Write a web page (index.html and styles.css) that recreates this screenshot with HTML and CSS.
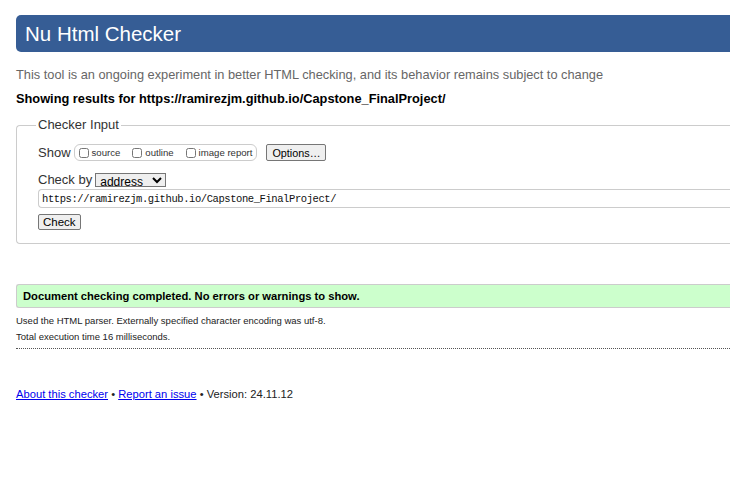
FILE: index.html
```html
<!DOCTYPE html>
<html lang="en">
<head>
  <meta charset="UTF-8" />
  <title>Showing results for https://ramirezjm.github.io/Capstone_FinalProject/ - Nu Html Checker</title>
  <link rel="stylesheet" href="styles.css">
</head>
<body>
  <div class="page">
    <h1 class="topbar">Nu Html Checker</h1>

    <p class="intro">This tool is an ongoing experiment in better HTML checking, and its behavior remains subject to change</p>
    <p class="showing">Showing results for https://ramirezjm.github.io/Capstone_FinalProject/</p>

    <form class="checker">
      <fieldset>
        <legend>Checker Input</legend>

        <div class="row">
          <span class="lbl">Show</span>
          <span class="opts">
            <label><input type="checkbox"> source</label>
            <label><input type="checkbox"> outline</label>
            <label><input type="checkbox"> image report</label>
          </span>
          <button type="button" class="btn">Options…</button>
        </div>

        <div class="row by">
          <span class="lbl">Check by</span>
          <select class="sel">
            <option>address</option>
            <option>file upload</option>
            <option>text input</option>
          </select>
        </div>

        <input class="url" type="text" value="https://ramirezjm.github.io/Capstone_FinalProject/">

        <div class="row">
          <button type="button" class="btn">Check</button>
        </div>
      </fieldset>
    </form>

    <p class="success">Document checking completed. No errors or warnings to show.</p>
    <p class="details">Used the HTML parser. Externally specified character encoding was utf-8.</p>
    <p class="details">Total execution time 16 milliseconds.</p>
    <hr class="dots">

    <p class="footer"><a href="#">About this checker</a> • <a href="#">Report an issue</a> • Version: 24.11.12</p>
  </div>
</body>
</html>
```

FILE: styles.css
```css
html, body {
  margin: 0;
  overflow: hidden;
}
body {
  font-family: "Liberation Sans", Arial, sans-serif;
  font-size: 12.8px;
  color: #000;
  background: #fff;
}
.page {
  width: 780px;
  padding: 15px 0 0 16px;
}
.topbar {
  margin: 0;
  height: 37px;
  line-height: 37px;
  padding-left: 9px;
  font-size: 20.5px;
  font-weight: normal;
  color: #fff;
  background: #365d95;
  border-radius: 5px 0 0 5px;
}
.intro {
  margin: 15px 0 0;
  color: #666;
  line-height: 16px;
}
.showing {
  margin: 8px 0 0;
  font-weight: bold;
  line-height: 16px;
}
.checker {
  margin-top: 10px;
}
fieldset {
  margin: 0;
  padding: 5px 0 13px 21px;
  border: 1px solid #ccc;
  border-right: 0;
  border-radius: 4px 0 0 4px;
}
legend {
  margin-left: -2px;
  padding: 0 2px;
  color: #333;
  font-size: 13px;
  line-height: 16px;
}
.row {
  display: flex;
  align-items: center;
  gap: 3px;
  margin-top: 6px;
}
.lbl {
  color: #333;
  font-size: 13px;
}
.opts {
  display: inline-flex;
  align-items: center;
  gap: 12px;
  height: 15px;
  padding: 0 4px;
  border: 1px solid #ccc;
  border-radius: 6px;
  font-size: 9.6px;
  color: #333;
}
.opts label {
  display: inline-flex;
  align-items: center;
}
.opts input {
  width: 10px;
  height: 10px;
  margin: 0 3px 0 0;
}
.btn {
  margin-left: 6px;
  padding: 0 5px;
  height: 17px;
  font: 10.8px "Liberation Sans", Arial, sans-serif;
  color: #000;
  background: #efefef;
  border: 1px solid #767676;
  border-radius: 2px;
}
.row:last-child .btn {
  margin-left: 0;
  height: 16px;
  padding: 0 4px;
  font-size: 11.5px;
}
.by {
  margin-top: 11px;
}
.sel {
  margin-left: 0;
  width: 71px;
  height: 14px;
  font: 12px "Liberation Sans", Arial, sans-serif;
  padding: 0;
  border: 1px solid #767676;
  border-radius: 0;
}
.url {
  display: block;
  box-sizing: border-box;
  width: 100%;
  height: 19px;
  margin-top: 2px;
  padding: 0 3px;
  font: 10.5px/17px "Liberation Mono", "DejaVu Sans Mono", monospace;
  letter-spacing: -0.42px;
  color: #111;
  border: 1px solid #ccc;
  border-right: 0;
  border-radius: 4px 0 0 4px;
}
.success {
  margin: 40px 0 0;
  padding: 0 6px;
  height: 22px;
  line-height: 22px;
  font-size: 11.2px;
  font-weight: bold;
  background: #ccffcc;
  border: 1px solid #ccc;
  border-right: 0;
  border-radius: 3px 0 0 3px;
}
.details {
  margin: 7px 0 0;
  font-size: 9.5px;
  line-height: 12px;
  color: #222;
}
.details + .details {
  margin-top: 4px;
}
.dots {
  margin: 5px 0 0;
  border: 0;
  border-top: 1px dotted #555;
}
.footer {
  margin: 39px 0 0;
  font-size: 11.2px;
  color: #222;
}
.footer a {
  color: #00e;
}
```
